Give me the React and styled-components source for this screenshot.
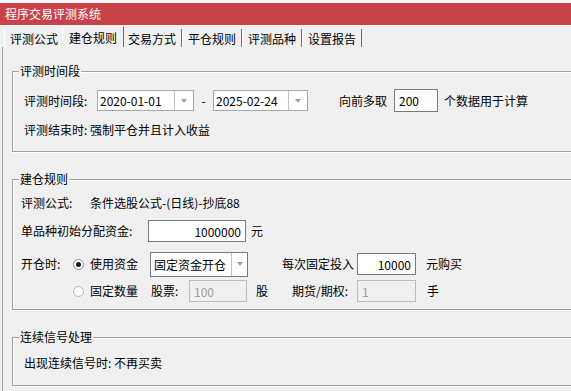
import React from "react";
import styled, { createGlobalStyle } from "styled-components";

const TABS = ["评测公式", "建仓规则", "交易方式", "平仓规则", "评测品种", "设置报告"];
const ACTIVE_TAB = 1;

const GlobalStyle = createGlobalStyle`
  html, body { margin: 0; padding: 0; background: #f0f0f0; overflow: hidden; }
  body {
    font-family: "Noto Sans CJK SC", "Noto Sans", sans-serif;
    font-size: 12px;
    color: #000;
  }
`;

const Window = styled.div`
  width: 571px;
  height: 391px;
  overflow: hidden;
  display: flex;
  flex-direction: column;
  box-sizing: border-box;
  border-top: 3px solid #f8f8f8;
  background: #f0f0f0;
`;

const TitleBar = styled.div`
  flex: none;
  height: 22px;
  line-height: 22px;
  padding-left: 5px;
  background: #c8424a;
  color: #fff;
`;

const TabBar = styled.div`
  flex: none;
  height: 22px;
  display: flex;
  align-items: flex-end;
  padding-left: 4px;
`;

const Tab = styled.div`
  position: relative;
  box-sizing: border-box;
  height: ${p => (p.$active ? 21 : 18)}px;
  padding: ${p => (p.$active ? "3px 6px 0" : "2px 5px 0")};
  margin: ${p => (p.$active ? "0 -2px" : "0")};
  z-index: ${p => (p.$active ? 1 : 0)};
  line-height: 16px;
  white-space: nowrap;
  background: #f0f0f0;
  border-left: 1px solid #fff;
  border-top: ${p => (p.$active ? "1px solid #fff" : "none")};
  border-right: 1px solid #6e6e6e;
`;

const Page = styled.div`
  flex: 1;
  margin-left: 2px;
  border-left: 1px solid #a0a0a0;
  padding: 24px 0 0 9px;
  display: flex;
  flex-direction: column;
  gap: 27px;
`;

const Group = styled.div`
  position: relative;
  flex: none;
  width: 620px;
  border: 1px solid #a0a0a0;
  box-shadow: inset 1px 1px 0 #fff, 1px 1px 0 #fff;
  padding: ${p => p.$pad};
`;

const GroupTitle = styled.div`
  position: absolute;
  top: -9px;
  left: 6px;
  padding: 0 1px;
  line-height: 16px;
  background: #f0f0f0;
`;

const Row = styled.div`
  display: flex;
  align-items: center;
  height: ${p => p.$h}px;
  margin-top: ${p => p.$mt || 0}px;
`;

const Text = styled.span`
  flex: none;
  box-sizing: border-box;
  width: ${p => (p.$w ? `${p.$w}px` : "auto")};
  margin-left: ${p => p.$ml || 0}px;
  padding-left: ${p => p.$pl || 0}px;
  padding-right: ${p => p.$pr || 0}px;
  text-align: ${p => p.$align || "left"};
  line-height: 16px;
  white-space: nowrap;
`;

const Combo = styled.div`
  flex: none;
  box-sizing: border-box;
  width: ${p => p.$w}px;
  height: ${p => p.$h}px;
  display: flex;
  background: #fff;
  border: 1px solid ${p => p.$border};
`;

const ComboValue = styled.div`
  flex: 1;
  padding-left: ${p => p.$pl}px;
  display: flex;
  align-items: center;
  white-space: nowrap;
  overflow: hidden;
`;

const ComboButton = styled.div`
  flex: none;
  width: ${p => p.$w}px;
  border-left: 1px solid #c4c4c4;
  display: flex;
  align-items: center;
  justify-content: center;

  &::after {
    content: "";
    border-left: 3.5px solid transparent;
    border-right: 3.5px solid transparent;
    border-top: 4px solid #a0a0a0;
  }
`;

const Field = styled.div`
  flex: none;
  box-sizing: border-box;
  width: ${p => p.$w}px;
  height: ${p => p.$h || 22}px;
  margin-left: ${p => p.$ml || 0}px;
  display: flex;
  align-items: center;
  justify-content: ${p => (p.$right ? "flex-end" : "flex-start")};
  padding: 0 ${p => (p.$right ? 4 : 0)}px 0 ${p => (p.$right ? 0 : 4)}px;
  background: ${p => (p.$disabled ? "#f0f0f0" : "#fff")};
  border: 1px solid ${p => (p.$disabled ? "#bcbcbc" : "#7a7a7a")};
  color: ${p => (p.$disabled ? "#9c9c9c" : "#000")};
`;

const Radio = styled.span`
  flex: none;
  box-sizing: border-box;
  width: 11px;
  height: 11px;
  margin-right: 6px;
  border-radius: 50%;
  border: 1px solid ${p => (p.$checked ? "#8a8a8a" : "#b4b4b4")};
  background: #fff;
  display: flex;
  align-items: center;
  justify-content: center;

  &::after {
    content: "";
    display: ${p => (p.$checked ? "block" : "none")};
    width: 5px;
    height: 5px;
    border-radius: 50%;
    background: #1a1a1a;
  }
`;

function DateCombo({ value, w }) {
  return (
    <Combo $w={w} $h={21} $border="#a6a6a6">
      <ComboValue $pl={2}>{value}</ComboValue>
      <ComboButton $w={18} />
    </Combo>
  );
}

export default function App() {
  return (
    <>
      <GlobalStyle />
      <Window>
        <TitleBar>程序交易评测系统</TitleBar>
        <TabBar>
          {TABS.map((t, i) => (
            <Tab key={t} $active={i === ACTIVE_TAB}>{t}</Tab>
          ))}
        </TabBar>
        <Page>
          <Group $pad="17px 0 12px 11px">
            <GroupTitle>评测时间段</GroupTitle>
            <Row $h={23}>
              <Text $w={73}>评测时间段:</Text>
              <DateCombo value="2020-01-01" w={97} />
              <Text $w={19} $align="center">-</Text>
              <DateCombo value="2025-02-24" w={95} />
              <Text $ml={31}>向前多取</Text>
              <Field $w={44} $h={23} $ml={7}>200</Field>
              <Text $ml={6}>个数据用于计算</Text>
            </Row>
            <Row $h={18} $mt={9}>
              <Text>评测结束时: 强制平仓并且计入收益</Text>
            </Row>
          </Group>

          <Group $pad="14px 0 7px 8px">
            <GroupTitle>建仓规则</GroupTitle>
            <Row $h={18}>
              <Text $w={69}>评测公式:</Text>
              <Text>条件选股公式-(日线)-抄底88</Text>
            </Row>
            <Row $h={22} $mt={8}>
              <Text $w={127}>单品种初始分配资金:</Text>
              <Field $w={98} $right>1000000</Field>
              <Text $ml={5}>元</Text>
            </Row>
            <Row $h={26} $mt={9}>
              <Text $w={52}>开仓时:</Text>
              <Radio $checked />
              <Text $w={60}>使用资金</Text>
              <Combo $w={98} $h={25} $border="#7a7a7a">
                <ComboValue $pl={3}>固定资金开仓</ComboValue>
                <ComboButton $w={15} />
              </Combo>
              <Text $w={109} $align="right" $pr={3}>每次固定投入</Text>
              <Field $w={59} $right>10000</Field>
              <Text $ml={10}>元购买</Text>
            </Row>
            <Row $h={22} $mt={3}>
              <Text $w={52} />
              <Radio />
              <Text $w={61}>固定数量</Text>
              <Text $w={38}>股票:</Text>
              <Field $w={58} $disabled>100</Field>
              <Text $w={45} $pl={9}>股</Text>
              <Text $w={65}>期货/期权:</Text>
              <Field $w={59} $disabled>1</Field>
              <Text $ml={11}>手</Text>
            </Row>
          </Group>

          <Group $pad="16px 0 13px 11px">
            <GroupTitle>连续信号处理</GroupTitle>
            <Row $h={18}>
              <Text>出现连续信号时: 不再买卖</Text>
            </Row>
          </Group>
        </Page>
      </Window>
    </>
  );
}
